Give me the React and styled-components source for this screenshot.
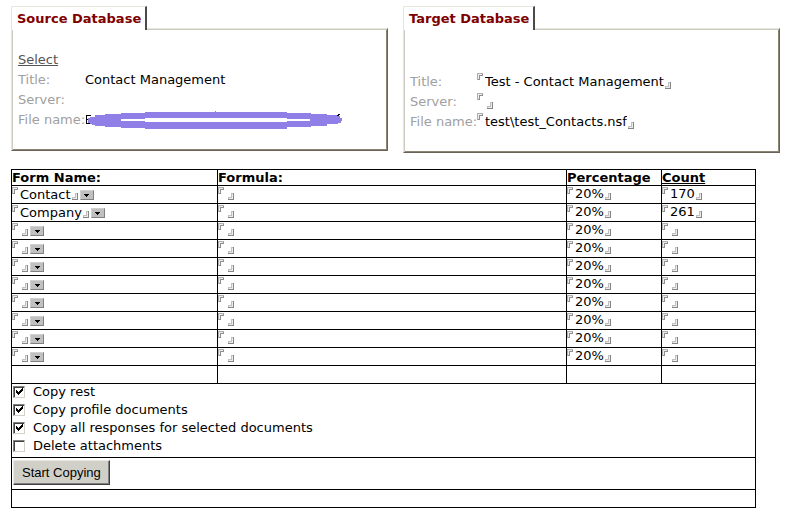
import { useRef, useState } from "react";
import { createGlobalStyle, styled } from "styled-components";

const GlobalStyle = createGlobalStyle`
    * {
        box-sizing: border-box;
    }
    body {
        margin: 0;
        background: white;
        color: black;
        font-family: "DejaVu Sans", Verdana, sans-serif;
        font-size: 13px;
    }
`;
const Page = styled.main`
    padding: 6px 5px 8px 11px;
`;
const Panels = styled.div`
    display: grid;
    grid-template-columns: 1fr 1fr;
    align-items: start;
    gap: 15px;
    margin-bottom: 16px;
`;
const Panel = styled.section`
    display: flex;
    flex-direction: column;
    align-items: flex-start;
`;
const Tab = styled.h2`
    z-index: 1;
    margin: 0 0 -2px;
    padding: 0 4px 0 5px;
    height: 24px;
    line-height: 24px;
    font-size: 13px;
    color: #800000;
    background: white;
    border-top: 1px solid #e6e6de;
    border-left: 1px solid #e6e6de;
    border-right: 2px solid #4a4a4a;
    border-top-left-radius: 2px;
`;
const PanelBody = styled.div`
    align-self: stretch;
    padding: 21px 6px 20px;
    border: 1px solid;
    border-color: #e6e6de #6b6255 #6b6255 #e6e6de;
    box-shadow: inset 1px 1px #ccccc0, inset -1px -1px #8c8474;
`;
const SelectRow = styled.div`
    height: ${props => props.$tall ? "22px" : "20px"};
    line-height: 20px;
`;
const SelectLink = styled.a`
    color: #555555;
`;
const Row = styled.div`
    display: grid;
    grid-template-columns: 67px 1fr;
    height: 20px;
    line-height: 20px;
    white-space: nowrap;
`;
const Key = styled.label`
    color: #a0a0a0;
`;
const Masked = styled.span`
    display: flex;
    align-items: center;
`;

const FieldBox = styled.span`
    display: inline-flex;
    height: ${props => props.$tall ? "20px" : "17px"};
    vertical-align: top;
`;
const Bracket = styled.svg`
    flex: none;
    width: 6px;
    height: 7px;
    align-self: ${props => props.$end ? "flex-end" : "flex-start"};
    margin: ${props => props.$end ? "0 0 3px 1px" : "1px 2px 0 0"};
`;
const FieldInput = styled.input`
    field-sizing: content;
    align-self: flex-start;
    height: ${props => props.$tall ? "20px" : "15px"};
    min-width: 1px;
    padding: 0;
    border: 0;
    outline: 0;
    background: none;
    font: inherit;
`;
const FieldSelect = styled.select`
    appearance: none;
    field-sizing: content;
    height: 17px;
    min-width: 1px;
    padding: 0;
    border: 0;
    outline: 0;
    background: none;
    color: black;
    font: inherit;
`;
const Arrow = styled.button`
    display: flex;
    align-items: center;
    justify-content: center;
    align-self: flex-end;
    width: 14px;
    height: 10px;
    margin: 0 0 3px 2px;
    padding: 0;
    border: 1px solid;
    border-color: #d0d0d0 #808080 #808080 #d0d0d0;
    background: #c0c0c0;
`;

const Table = styled.table`
    width: calc(100% - 24px);
    table-layout: fixed;
    border-collapse: collapse;
`;
const Col = styled.col`
    width: ${props => props.$width};
`;
const Th = styled.th`
    height: 16px;
    padding: 0;
    border: 1px solid black;
    text-align: left;
    line-height: 15px;
`;
const CountLink = styled.a`
    color: black;
`;
const Td = styled.td`
    height: 18px;
    padding: 0;
    border: 1px solid black;
    vertical-align: top;
    line-height: 17px;
`;
const Checks = styled.div`
    padding-bottom: 1px;
`;
const CheckLabel = styled.label`
    display: flex;
    gap: 8px;
    height: 18px;
    line-height: 16px;
    padding-left: 1px;
`;
const CheckBox = styled.input`
    appearance: none;
    display: grid;
    width: 12px;
    height: 12px;
    margin: 2px 0 0;
    background: white;
    border: 1px solid;
    border-color: #808080 #d4d0c8 #d4d0c8 #808080;
    box-shadow: inset 1px 1px #404040;
`;
const CheckSlot = styled.span`
    display: grid;
    align-items: start;
    > * {
        grid-area: 1 / 1;
    }
`;
const Tick = styled.svg`
    width: 8px;
    height: 8px;
    margin: 4px 0 0 3px;
    pointer-events: none;
`;
const ButtonRow = styled.div`
    height: 31px;
    padding: 2px 0 0 1px;
`;
const StartButton = styled.button`
    height: 25px;
    padding: 0 8px;
    border: 1px solid;
    border-color: #e8e8e0 #404040 #404040 #e8e8e0;
    box-shadow: inset -1px -1px #808080;
    background: #d0d0c8;
    color: black;
    font-family: "Liberation Sans", Arial, sans-serif;
    font-size: 13px;
`;

function Open() {
    return (
        <Bracket viewBox="0 0 6 7" shapeRendering="crispEdges" aria-hidden="true">
            <path d="M0 0h6v3H3v4H0z" fill="#909090" />
            <path d="M1 1h4v1H2v4H1z" fill="#ececec" />
            <path d="M0 0h6v1H1v6H0z" fill="#b0b0b0" />
        </Bracket>
    );
}

function Close() {
    return (
        <Bracket $end viewBox="0 0 6 7" shapeRendering="crispEdges" aria-hidden="true">
            <path d="M3 0h3v7H0V4h3z" fill="#c0c0c0" />
            <path d="M4 1h1v5H1V5h3z" fill="#ececec" />
            <path d="M5 0h1v7H0V6h5z" fill="#868686" />
        </Bracket>
    );
}

function Field({ id, label, value, tall }) {
    return (
        <FieldBox $tall={tall}>
            <Open />
            <FieldInput $tall={tall} id={id} aria-label={label} defaultValue={value} />
            <Close />
        </FieldBox>
    );
}

function FormPicker({ value, label }) {
    const select = useRef(null);

    return (
        <FieldBox>
            <Open />
            <FieldSelect ref={select} aria-label={label} defaultValue={value}>
                <option value=""></option>
                <option>Contact</option>
                <option>Company</option>
            </FieldSelect>
            <Close />
            <Arrow type="button" aria-label="Choose form" onClick={() => select.current.showPicker()}>
                <svg width="5" height="3" viewBox="0 0 5 3" shapeRendering="crispEdges">
                    <path d="M0 0h5v1H4v1H3v1H2V2H1V1H0z" />
                </svg>
            </Arrow>
        </FieldBox>
    );
}

function Check({ label, initial }) {
    const [checked, setChecked] = useState(initial);

    return (
        <CheckLabel>
            <CheckSlot>
                <CheckBox type="checkbox" checked={checked} onChange={() => setChecked(!checked)} />
                {checked && (
                    <Tick viewBox="0 0 8 8" shapeRendering="crispEdges">
                        <path d="M0 2h1v1h1v1h1V3h1V2h1V1h1V0h1v3H6v1H5v1H4v1H3v1H2V6H1V5H0z" />
                    </Tick>
                )}
            </CheckSlot>
            {label}
        </CheckLabel>
    );
}

const forms = [
    { name: "Contact", count: "170" },
    { name: "Company", count: "261" },
    ...Array.from({ length: 8 }, () => ({ name: "", count: "" })),
];

export default function App() {
    return (
        <Page>
            <GlobalStyle />
            <Panels>
                <Panel>
                    <Tab>Source Database</Tab>
                    <PanelBody>
                        <SelectRow><SelectLink href="#select">Select</SelectLink></SelectRow>
                        <Row><Key as="span">Title:</Key><span>Contact Management</span></Row>
                        <Row><Key as="span">Server:</Key></Row>
                        <Row>
                            <Key as="span">File name:</Key>
                            <Masked>
                                <svg width="258" height="20" viewBox="0 0 258 20" shapeRendering="crispEdges" aria-hidden="true">
                                    <path d="M1 5h5v1H2v3h3v1H2v3h4v1H1z" />
                                    <path d="M253 4h2v1h-1v1h-2V5h1z" />
                                    <path d="M130 1h1v1h-1z" fill="#917fe8" />
                                    <path d="M3 10V8h2V7h5V5h10V4h16V3h24V2h142v1h24v1h16v1h10v1h3v2h2v3h-1v2h-3v1h-11v2h-16v1h-24v2H60v-1H36v-1H20v-1H10v-1H7v-1H5v-1H3z" fill="#917fe8" />
                                    <path d="M36 9h24V8h142v1h23v2h-23v1H60v-1H36z" fill="white" />
                                </svg>
                            </Masked>
                        </Row>
                    </PanelBody>
                </Panel>
                <Panel>
                    <Tab>Target Database</Tab>
                    <PanelBody>
                        <SelectRow $tall />
                        <Row><Key htmlFor="title">Title:</Key><Field tall id="title" value="Test - Contact Management" /></Row>
                        <Row><Key htmlFor="server">Server:</Key><Field tall id="server" value="" /></Row>
                        <Row><Key htmlFor="file">File name:</Key><Field tall id="file" value="test\test_Contacts.nsf" /></Row>
                    </PanelBody>
                </Panel>
            </Panels>
            <Table>
                <colgroup>
                    <Col $width="206px" />
                    <Col />
                    <Col $width="95px" />
                    <Col $width="94px" />
                </colgroup>
                <thead>
                    <tr>
                        <Th>Form Name:</Th>
                        <Th>Formula:</Th>
                        <Th>Percentage</Th>
                        <Th><CountLink href="#count">Count</CountLink></Th>
                    </tr>
                </thead>
                <tbody>
                    {forms.map((form, i) => (
                        <tr key={i}>
                            <Td><FormPicker label={`Form name ${i + 1}`} value={form.name} /></Td>
                            <Td><Field label={`Formula ${i + 1}`} value="" /></Td>
                            <Td><Field label={`Percentage ${i + 1}`} value="20%" /></Td>
                            <Td><Field label={`Count ${i + 1}`} value={form.count} /></Td>
                        </tr>
                    ))}
                    <tr><Td /><Td /><Td /><Td /></tr>
                    <tr>
                        <Td colSpan={4}>
                            <Checks>
                                <Check label="Copy rest" initial={true} />
                                <Check label="Copy profile documents" initial={true} />
                                <Check label="Copy all responses for selected documents" initial={true} />
                                <Check label="Delete attachments" initial={false} />
                            </Checks>
                        </Td>
                    </tr>
                    <tr>
                        <Td colSpan={4}>
                            <ButtonRow><StartButton type="button">Start Copying</StartButton></ButtonRow>
                        </Td>
                    </tr>
                    <tr><Td colSpan={4} /></tr>
                </tbody>
            </Table>
        </Page>
    );
}
